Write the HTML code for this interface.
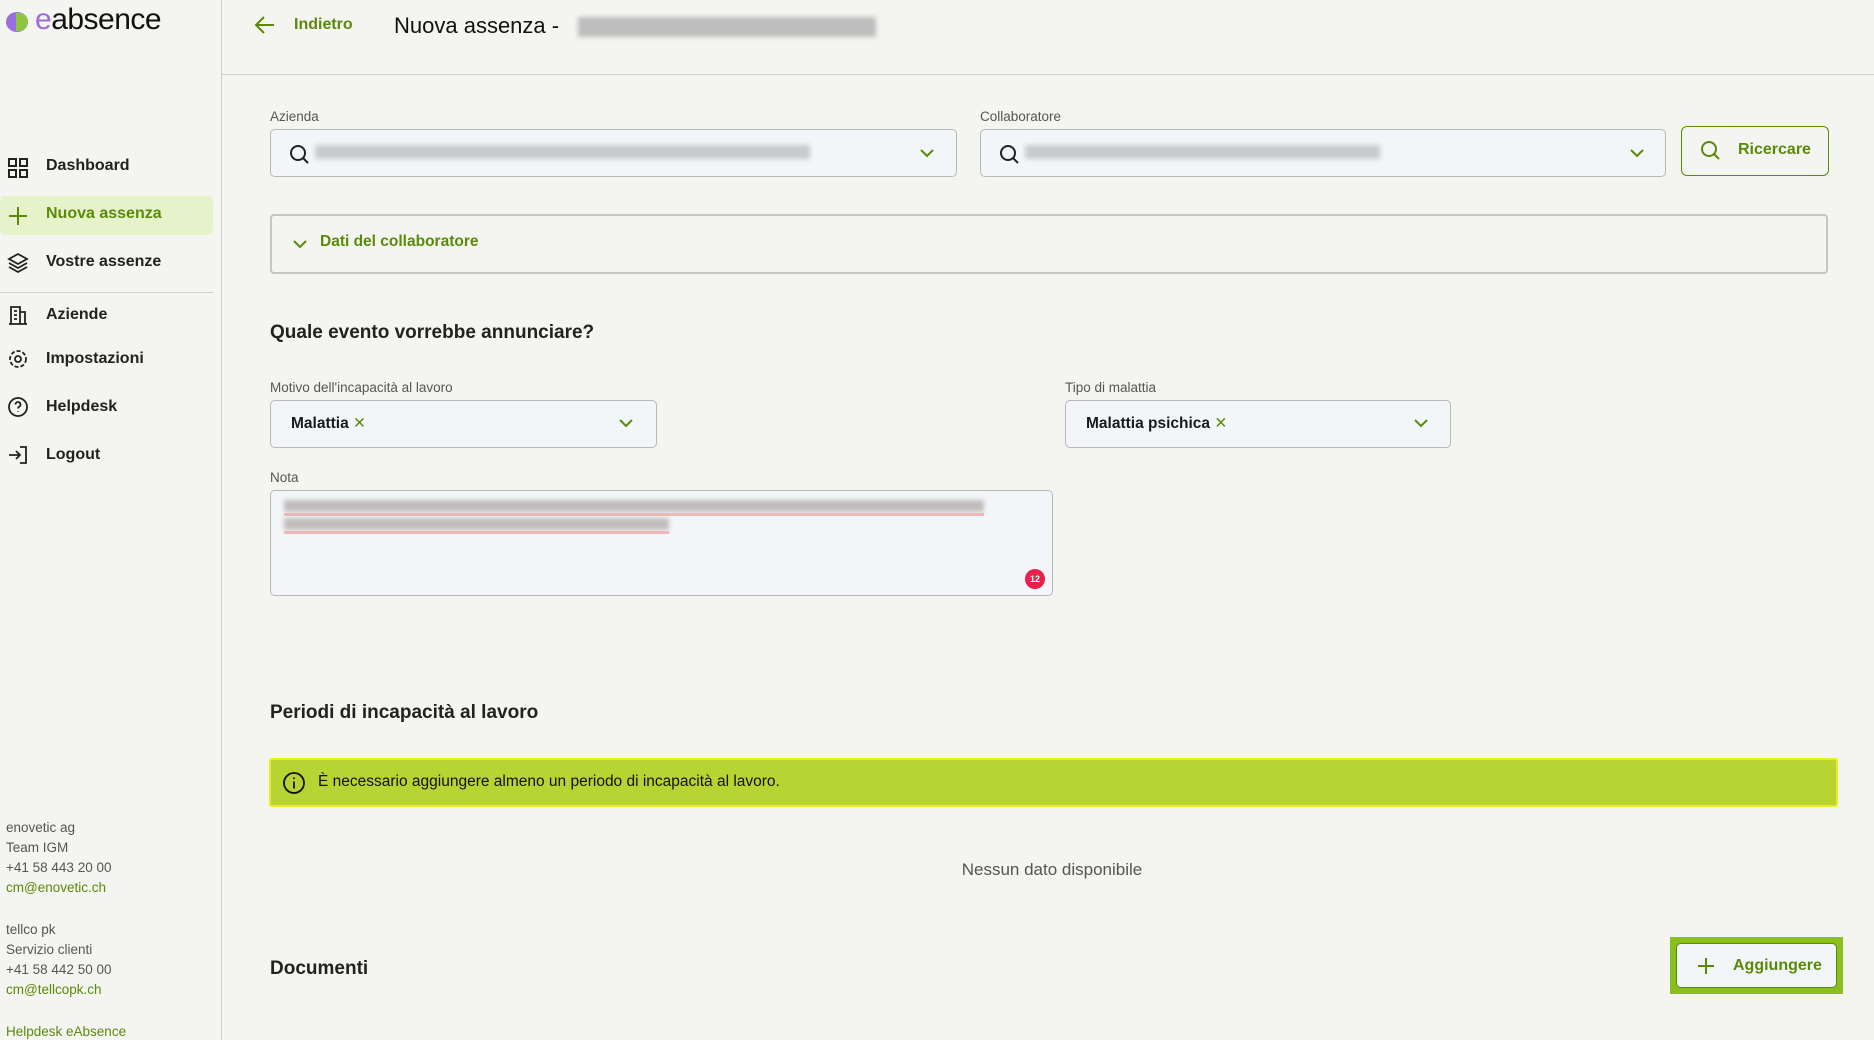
<!DOCTYPE html>
<html><head><meta charset="utf-8"><style>
*{box-sizing:border-box;margin:0;padding:0}
body{width:1874px;height:1040px;background:#f4f4f0;font-family:"Liberation Sans",sans-serif;color:#1a1a1a;position:relative;overflow:hidden}
.a{position:absolute}
.side{left:0;top:0;width:222px;height:1040px;border-right:1px solid #cfcfcf}
.nav{left:46px;font-size:16px;font-weight:bold;color:#222}
.ic{left:7px;width:22px;height:22px}
.ft{left:6px;font-size:13.5px;color:#555}
.g{color:#5a8a0a}
.lbl{font-size:13.5px;color:#555}
.inp{background:#f3f6f8;border:1px solid #b8b8b8;border-radius:5px}
.blur{background:#c9cacc;filter:blur(2.5px);height:14px}
h2{position:absolute;font-size:20px;font-weight:bold;color:#222}
</style></head><body>
<div class="a side"></div>
<!-- logo -->
<div class="a" style="left:6px;top:12px;width:22px;height:20px;border-radius:50%;background:#9b6ee0"></div>
<div class="a" style="left:16px;top:13px;width:12px;height:18px;border-radius:0 10px 10px 0;background:#8cc63f"></div>
<div class="a" style="left:35px;top:3px;font-size:30px;color:#111;letter-spacing:-0.5px"><span style="color:#9b6ee0">e</span>absence</div>
<!-- nav -->
<svg class="a ic" style="top:157px" viewBox="0 0 22 22" fill="none" stroke="#222" stroke-width="2"><rect x="2" y="2" width="7" height="7"/><rect x="13" y="2" width="7" height="7"/><rect x="2" y="13" width="7" height="7"/><rect x="13" y="13" width="7" height="7"/></svg>
<div class="a nav" style="top:157px">Dashboard</div>
<div class="a" style="left:0;top:196px;width:213px;height:39px;background:#e6f2c9;border-radius:6px"></div>
<svg class="a ic" style="top:205px" viewBox="0 0 22 22" stroke="#5a8a0a" stroke-width="2"><path d="M11 2v18M2 11h18"/></svg>
<div class="a nav g" style="top:205px">Nuova assenza</div>
<svg class="a ic" style="top:252px" viewBox="0 0 22 22" fill="none" stroke="#222" stroke-width="1.8"><path d="M11 2l9 5-9 5-9-5z M2 11l9 5 9-5 M2 15l9 5 9-5"/></svg>
<div class="a nav" style="top:253px">Vostre assenze</div>
<div class="a" style="left:0;top:292px;width:213px;height:1px;background:#cfcfcf"></div>
<svg class="a ic" style="top:304px" viewBox="0 0 22 22" fill="none" stroke="#222" stroke-width="1.8"><path d="M2 20h18M4 20V3h9v17M13 8h5v12M7 7h3M7 11h3M7 15h3"/></svg>
<div class="a nav" style="top:306px">Aziende</div>
<svg class="a ic" style="top:348px" viewBox="0 0 22 22" fill="none" stroke="#222" stroke-width="1.8"><circle cx="11" cy="11" r="3"/><circle cx="11" cy="11" r="8" stroke-dasharray="4 2"/></svg>
<div class="a nav" style="top:350px">Impostazioni</div>
<svg class="a ic" style="top:396px" viewBox="0 0 22 22" fill="none" stroke="#222" stroke-width="1.8"><circle cx="11" cy="11" r="9"/><path d="M8.5 8.5a2.5 2.5 0 1 1 3.5 2.3c-.7.4-1 .9-1 1.7M11 15.5v.5"/></svg>
<div class="a nav" style="top:398px">Helpdesk</div>
<svg class="a ic" style="top:444px" viewBox="0 0 22 22" fill="none" stroke="#222" stroke-width="1.8"><path d="M13 3h6v16h-6M2 11h11M9 7l4 4-4 4"/></svg>
<div class="a nav" style="top:446px">Logout</div>
<div class="a ft" style="top:820px">enovetic ag</div>
<div class="a ft" style="top:840px">Team IGM</div>
<div class="a ft" style="top:860px">+41 58 443 20 00</div>
<div class="a ft g" style="top:880px">cm@enovetic.ch</div>
<div class="a ft" style="top:922px">tellco pk</div>
<div class="a ft" style="top:942px">Servizio clienti</div>
<div class="a ft" style="top:962px">+41 58 442 50 00</div>
<div class="a ft g" style="top:982px">cm@tellcopk.ch</div>
<div class="a ft g" style="top:1024px">Helpdesk eAbsence</div>
<!-- header -->
<svg class="a" style="left:254px;top:14px" width="22" height="22" viewBox="0 0 22 22" fill="none" stroke="#5a8a0a" stroke-width="2"><path d="M20 11H3M10 3l-8 8 8 8"/></svg>
<div class="a g" style="left:294px;top:16px;font-size:16px;font-weight:bold">Indietro</div>
<div class="a" style="left:394px;top:13px;font-size:22px;color:#111">Nuova assenza -</div>
<div class="a blur" style="left:578px;top:17px;width:298px;height:20px;background:#bdbdbd"></div>
<div class="a" style="left:222px;top:74px;width:1652px;height:1px;background:#cfcfcf"></div>
<!-- row 1 -->
<div class="a lbl" style="left:270px;top:109px">Azienda</div>
<div class="a inp" style="left:270px;top:129px;width:687px;height:48px"></div>
<svg class="a" style="left:288px;top:143px" width="22" height="22" viewBox="0 0 22 22" fill="none" stroke="#222" stroke-width="2"><circle cx="10" cy="10" r="7"/><path d="M15 15l5 5"/></svg>
<div class="a blur" style="left:315px;top:145px;width:495px"></div>
<svg class="a" style="left:918px;top:145px" width="18" height="16" viewBox="0 0 18 16" fill="none" stroke="#5a8a0a" stroke-width="2"><path d="M3 5l6 6 6-6"/></svg>
<div class="a lbl" style="left:980px;top:109px">Collaboratore</div>
<div class="a inp" style="left:980px;top:129px;width:686px;height:48px"></div>
<svg class="a" style="left:998px;top:143px" width="22" height="22" viewBox="0 0 22 22" fill="none" stroke="#222" stroke-width="2"><circle cx="10" cy="10" r="7"/><path d="M15 15l5 5"/></svg>
<div class="a blur" style="left:1025px;top:145px;width:355px"></div>
<svg class="a" style="left:1628px;top:145px" width="18" height="16" viewBox="0 0 18 16" fill="none" stroke="#5a8a0a" stroke-width="2"><path d="M3 5l6 6 6-6"/></svg>
<div class="a" style="left:1681px;top:126px;width:148px;height:50px;border:1.5px solid #5a8a0a;border-radius:6px"></div>
<svg class="a" style="left:1699px;top:139px" width="22" height="22" viewBox="0 0 22 22" fill="none" stroke="#5a8a0a" stroke-width="2"><circle cx="10" cy="10" r="7"/><path d="M15 15l5 5"/></svg>
<div class="a g" style="left:1738px;top:141px;font-size:16px;font-weight:bold">Ricercare</div>
<!-- dati -->
<div class="a" style="left:270px;top:214px;width:1558px;height:60px;border:2px solid #c6c6c6;border-radius:4px"></div>
<svg class="a" style="left:291px;top:236px" width="18" height="16" viewBox="0 0 18 16" fill="none" stroke="#5a8a0a" stroke-width="2"><path d="M3 5l6 6 6-6"/></svg>
<div class="a g" style="left:320px;top:233px;font-size:15.5px;font-weight:bold">Dati del collaboratore</div>
<h2 style="left:270px;top:322px;font-size:19px">Quale evento vorrebbe annunciare?</h2>
<div class="a lbl" style="left:270px;top:380px">Motivo dell'incapacità al lavoro</div>
<div class="a inp" style="left:270px;top:400px;width:387px;height:48px"></div>
<div class="a" style="left:291px;top:414px;font-size:15.5px;font-weight:bold">Malattia <span class="g" style="font-weight:normal">✕</span></div>
<svg class="a" style="left:617px;top:415px" width="18" height="16" viewBox="0 0 18 16" fill="none" stroke="#5a8a0a" stroke-width="2"><path d="M3 5l6 6 6-6"/></svg>
<div class="a lbl" style="left:1065px;top:380px">Tipo di malattia</div>
<div class="a inp" style="left:1065px;top:400px;width:386px;height:48px"></div>
<div class="a" style="left:1086px;top:414px;font-size:15.5px;font-weight:bold">Malattia psichica <span class="g" style="font-weight:normal">✕</span></div>
<svg class="a" style="left:1412px;top:415px" width="18" height="16" viewBox="0 0 18 16" fill="none" stroke="#5a8a0a" stroke-width="2"><path d="M3 5l6 6 6-6"/></svg>
<div class="a lbl" style="left:270px;top:470px">Nota</div>
<div class="a inp" style="left:270px;top:490px;width:783px;height:106px"></div>
<div class="a blur" style="left:284px;top:500px;width:700px;height:12px;background:#c0bcbc"></div>
<div class="a" style="left:284px;top:513px;width:700px;height:3px;background:#f0b8b8"></div>
<div class="a blur" style="left:284px;top:518px;width:385px;height:12px;background:#c0bcbc"></div>
<div class="a" style="left:284px;top:531px;width:385px;height:3px;background:#f0b8b8"></div>
<div class="a" style="left:1025px;top:569px;width:20px;height:20px;border-radius:50%;background:#e8204a;color:#fff;font-size:9px;text-align:center;line-height:20px;font-weight:bold">12</div>
<h2 style="left:270px;top:702px;font-size:19px">Periodi di incapacità al lavoro</h2>
<div class="a" style="left:269px;top:758px;width:1569px;height:49px;background:#b8d432;border:2px solid #e9ef1e;border-radius:3px"></div>
<svg class="a" style="left:282px;top:771px" width="24" height="24" viewBox="0 0 24 24" fill="none" stroke="#111" stroke-width="1.8"><circle cx="12" cy="12" r="10"/><path d="M12 10.5v7M12 6.5v1.5"/></svg>
<div class="a" style="left:318px;top:773px;font-size:15.5px;color:#111">È necessario aggiungere almeno un periodo di incapacità al lavoro.</div>
<div class="a" style="left:0;width:2104px;top:860px;text-align:center;font-size:17px;color:#555">Nessun dato disponibile</div>
<h2 style="left:270px;top:958px;font-size:19px">Documenti</h2>
<div class="a" style="left:1670px;top:937px;width:173px;height:57px;background:#8abf1f;padding:6px">
<div style="width:100%;height:100%;background:#f3f6f8;border:1px solid #5a8a0a;border-radius:5px"></div></div>
<svg class="a" style="left:1696px;top:956px" width="20" height="20" viewBox="0 0 20 20" stroke="#5a8a0a" stroke-width="2"><path d="M10 2v16M2 10h16"/></svg>
<div class="a g" style="left:1733px;top:957px;font-size:16px;font-weight:bold">Aggiungere</div>
</body></html>
